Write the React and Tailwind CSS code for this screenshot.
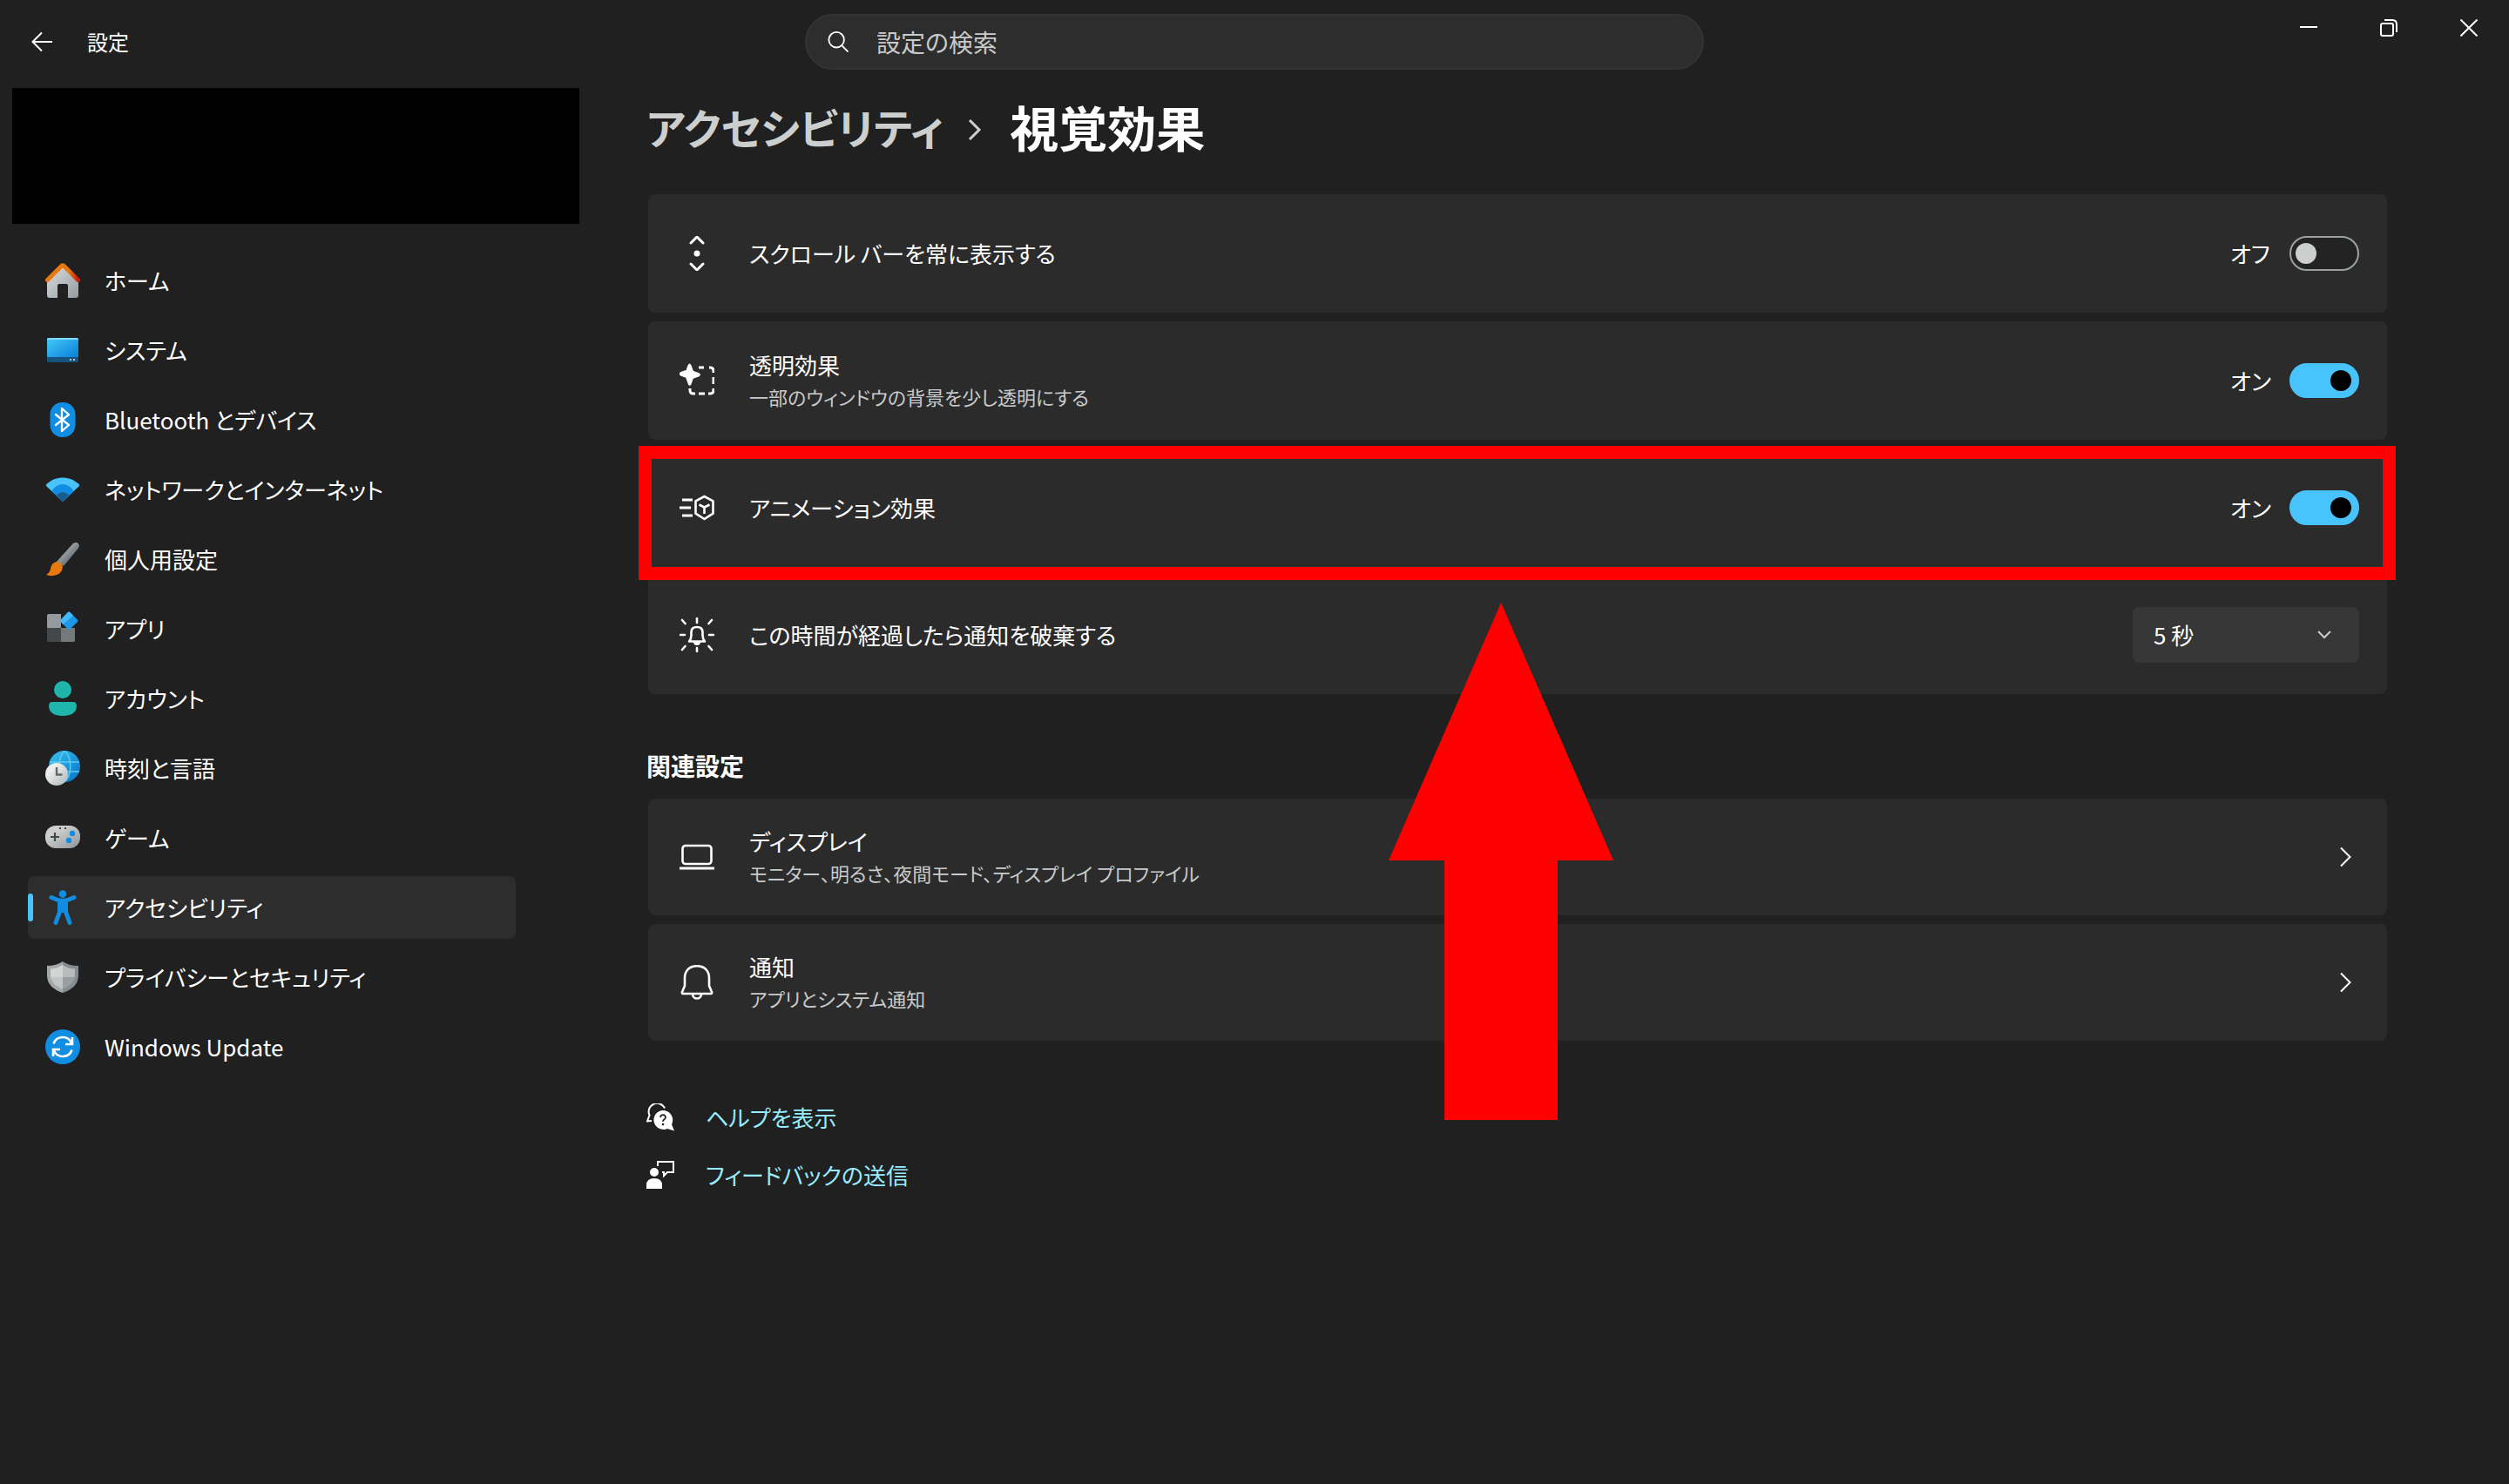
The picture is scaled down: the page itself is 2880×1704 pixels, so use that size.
import { useState } from "react";

function HomeIcon() {
  return (
    <svg viewBox="0 0 40 40" className="size-10 shrink-0" aria-hidden="true">
      <defs>
        <linearGradient id="homeWall" x1="0" y1="0" x2="1" y2="1">
          <stop offset="0" stopColor="#dcdede" />
          <stop offset="1" stopColor="#949ca0" />
        </linearGradient>
        <linearGradient id="homeRoof" x1="0" y1="0" x2="1" y2="0">
          <stop offset="0.7" stopColor="#e8790f" />
          <stop offset="1" stopColor="#cc1b10" />
        </linearGradient>
      </defs>
      <path d="M2 18 20 3l18 15v19a3 3 0 0 1-3 3h-9V26a2 2 0 0 0-2-2h-8a2 2 0 0 0-2 2v14H5a3 3 0 0 1-3-3z" fill="url(#homeWall)" />
      <path d="M2.500 19.500 18.500 3.500q1.500-1.400 3 0l16 16" fill="none" stroke="url(#homeRoof)" strokeWidth="5" strokeLinecap="round" />
    </svg>
  );
}

function SystemIcon() {
  return (
    <svg viewBox="0 0 40 40" className="size-10 shrink-0" aria-hidden="true">
      <defs>
        <linearGradient id="sysScreen" x1="0" y1="0" x2="1" y2="1">
          <stop offset="0.1" stopColor="#3fc3f5" />
          <stop offset="0.9" stopColor="#0f86dc" />
        </linearGradient>
      </defs>
      <rect x="2" y="6" width="36" height="28" rx="2" fill="#17527e" />
      <path d="M2 8a2 2 0 0 1 2-2h32a2 2 0 0 1 2 2v20H2z" fill="url(#sysScreen)" />
      <path d="M2 8a2 2 0 0 1 2-2h32a2 2 0 0 1 2 2z" fill="#7fdcfb" />
      <path d="M28 30h2v2h-2zM32 30h2v2h-2z" fill="#b8c4cc" />
    </svg>
  );
}

function BluetoothIcon() {
  return (
    <svg viewBox="0 0 40 40" className="size-10 shrink-0" aria-hidden="true">
      <rect x="5.500" width="29" height="40" rx="14" fill="#118ee2" />
      <path d="m12 14 15 12-8 7V7l8 7-15 12" fill="none" stroke="#fff" strokeWidth="2.300" strokeLinejoin="round" strokeLinecap="round" />
    </svg>
  );
}

function NetworkIcon() {
  return (
    <svg viewBox="0 0 40 40" className="size-10 shrink-0" aria-hidden="true">
      <path d="M1.500 16.500q-1.500-1.400 0-2.700C12 4 28 4 38.500 13.800q1.500 1.300 0 2.700L20 34z" fill="#48c3fb" />
      <path d="M7.500 22q5-8 12.500-8t12.500 8L21 33.500q-1 .8-2 0z" fill="#118ee2" />
      <path d="M13 26.500q7-7 14 0l-5.700 6.600q-1.300 1.300-2.600 0z" fill="#1a5c8c" />
    </svg>
  );
}

function BrushIcon() {
  return (
    <svg viewBox="0 0 40 40" className="size-10 shrink-0" aria-hidden="true">
      <defs>
        <linearGradient id="brushStem" x1="0" y1="0" x2="1" y2="1">
          <stop offset="0.3" stopColor="#a6acb0" />
          <stop offset="0.7" stopColor="#6a7073" />
        </linearGradient>
      </defs>
      <path d="M12 24 31.500 2.500q4-3.500 7 .5 1 2-1 5L21 28z" fill="url(#brushStem)" />
      <path d="M6 31q1-7 7-8 5 0 7 6-1 9-11 10-5 .5-8-1 4-2 5-7z" fill="#e8790f" />
    </svg>
  );
}

function AppsIcon() {
  return (
    <svg viewBox="0 0 40 40" className="size-10 shrink-0" aria-hidden="true">
      <path d="M2 5a2 2 0 0 1 2-2h14v16H2z" fill="#949a9e" />
      <path d="M2 19h16v16H4a2 2 0 0 1-2-2z" fill="#45484a" />
      <path d="M18 19h16v14a2 2 0 0 1-2 2H18z" fill="#74797c" />
      <path d="M17.600 11.800q-.9-1 0-2L26 1q1.200-1 2.300 0L37 9.700q1 1.100 0 2.200l-8.700 8.700q-1.100 1-2.300 0z" fill="#1c97ea" />
      <path d="M17.600 11.800q-.9-1 0-2L26 1q1.200-1 2.300 0L32 4.700 20.500 15z" fill="#45b8f7" />
    </svg>
  );
}

function AccountIcon() {
  return (
    <svg viewBox="0 0 40 40" className="size-10 shrink-0" aria-hidden="true">
      <circle cx="20" cy="10" r="10" fill="#1fb5ad" />
      <path d="M8 24h24q4 0 4 5-1 11-16 11T4 29q0-5 4-5z" fill="#1fb5ad" />
    </svg>
  );
}

function TimeIcon() {
  return (
    <svg viewBox="0 0 40 40" className="size-10 shrink-0" aria-hidden="true">
      <defs>
        <linearGradient id="globe" x1="0" y1="0" x2="1" y2="1">
          <stop offset="0.2" stopColor="#2fb4e8" />
          <stop offset="0.8" stopColor="#1180cf" />
        </linearGradient>
        <linearGradient id="clockFace" x1="0" y1="0" x2="1" y2="1">
          <stop offset="0.3" stopColor="#eceeee" />
          <stop offset="1" stopColor="#aeb3b5" />
        </linearGradient>
      </defs>
      <circle cx="22" cy="18" r="18" fill="url(#globe)" />
      <path d="M5 13h34M18 24h21M22 0C14 8 14 26 22 36M22 0c9 8 9 28 0 36" fill="none" stroke="#5ccdf5" strokeWidth="1.500" />
      <circle cx="13" cy="27" r="13" fill="url(#clockFace)" />
      <path d="M13 19v8.500h6.500" fill="none" stroke="#62686b" strokeWidth="2.400" />
    </svg>
  );
}

function GameIcon() {
  return (
    <svg viewBox="0 0 40 40" className="size-10 shrink-0" aria-hidden="true">
      <defs>
        <linearGradient id="pad" x1="0" y1="0" x2="1" y2="1">
          <stop offset="0.3" stopColor="#cdcfcf" />
          <stop offset="1" stopColor="#8b9397" />
        </linearGradient>
      </defs>
      <rect y="6" width="40" height="26" rx="12" fill="url(#pad)" />
      <path d="M6 19h10M11 14v10" stroke="#45484a" strokeWidth="2.200" />
      <path d="M16 9h2M22 9h2" stroke="#45484a" strokeWidth="2" />
      <circle cx="31" cy="15" r="3.200" fill="#118ee2" />
      <circle cx="27" cy="23" r="3.200" fill="#118ee2" />
    </svg>
  );
}

function AccessibilityIcon() {
  return (
    <svg viewBox="0 0 40 40" className="size-10 shrink-0" aria-hidden="true">
      <circle cx="20" cy="4.500" r="4.300" fill="#118ee2" />
      <path d="M7 8.500 16 12h8l9-3.500" fill="none" stroke="#118ee2" strokeWidth="5" strokeLinecap="round" strokeLinejoin="round" />
      <path d="M14 11h12v15H14z" fill="#118ee2" />
      <path d="M16.500 25 12 37.500M23.500 25l4.500 12.500" fill="none" stroke="#118ee2" strokeWidth="5" strokeLinecap="round" />
    </svg>
  );
}

function ShieldIcon() {
  return (
    <svg viewBox="0 0 40 40" className="size-10 shrink-0" aria-hidden="true">
      <path d="M20 2q7 5 18 5v11q0 14-18 20z" fill="#858b8e" />
      <path d="M20 2Q13 7 2 7v11q0 14 18 20z" fill="#a4a8aa" />
      <path d="M20 6q6 4 14 4.500V20H20z" fill="#b8bbbc" />
      <path d="M20 6q-6 4-14 4.500V20h14z" fill="#d2d4d4" />
      <path d="M6 20h14v14Q8 29 6 20z" fill="#c2c5c6" />
      <path d="M20 20h14q-2 9-14 14z" fill="#999ea0" />
    </svg>
  );
}

function UpdateIcon() {
  return (
    <svg viewBox="0 0 40 40" className="size-10 shrink-0" aria-hidden="true">
      <circle cx="20" cy="20" r="20" fill="#118ee2" />
      <path d="M9.500 16.500a11 11 0 0 1 20.500-1M31 9v8h-8M30.500 23.500a11 11 0 0 1-20.500 1M9 31v-8h8" fill="none" stroke="#fff" strokeWidth="2.600" />
    </svg>
  );
}

const iconClass = "size-10 shrink-0 fill-none stroke-white stroke-2";

function ScrollIcon() {
  return (
    <svg viewBox="0 0 40 40" className={iconClass} aria-hidden="true">
      <path d="m13 8 7-7 7 7M13 32l7 7 7-7" className="stroke-3" strokeLinecap="round" />
      <circle cx="20" cy="20" r="2.500" fill="#fff" />
    </svg>
  );
}

function TransparencyIcon() {
  return (
    <svg viewBox="0 0 40 40" className={iconClass} aria-hidden="true">
      <path d="M11.500 1q1 0 1.500 1.500l2 5.500q.4 1.300 1.700 1.700l5.500 2q1.300.5 1.300 1.600t-1.300 1.600l-5.500 2q-1.300.4-1.700 1.700l-2 5.500q-.5 1.500-1.500 1.500T10 23.100l-2-5.500q-.4-1.300-1.700-1.700l-5.300-2q-1-.5-1-1.600t1-1.600l5.300-2Q7.600 9.300 8 8l2-5.500Q10.500 1 11.500 1z" fill="#fff" stroke="#fff" strokeWidth="1" />
      <path d="M22 5h6M34 5h1q4 0 4 4v2M39 16v8M39 29v2q0 4-4 4h-2M29 35h-7M18 35h-2q-4 0-4-4v-2" className="stroke-3" />
    </svg>
  );
}

function AnimationIcon() {
  return (
    <svg viewBox="0 0 40 40" className={iconClass} aria-hidden="true">
      <path d="M3 11h12M0 20h13M3 29h12" className="stroke-3" />
      <path d="m28.500 7 10 5.300v14.400l-10 6.300-10-6.300V12.300zM22.500 16.500l6 3 6-3M28.500 19.500V27" className="stroke-[2.600]" strokeLinejoin="round" />
    </svg>
  );
}

function DismissIcon() {
  return (
    <svg viewBox="0 0 40 40" className={iconClass} aria-hidden="true">
      <path d="M20 1v5M20 35v4M1 20h5M34 20h5M3 3l3.500 4M37 3l-3.500 4M3 37l3.500-4M37 37l-3.500-4" className="stroke-[2.600]" strokeLinecap="round" />
      <path d="M11 27.500q2.500-3 2.500-7v-3.500q0-6 6.500-6t6.500 6v3.500q0 4 2.500 7z" className="stroke-[2.600]" strokeLinejoin="round" />
      <path d="M17 28a3 3 0 0 0 6 0z" fill="#fff" />
    </svg>
  );
}

function DisplayIcon() {
  return (
    <svg viewBox="0 0 40 40" className={iconClass} aria-hidden="true">
      <rect x="3.500" y="7" width="33" height="21" rx="3.500" className="stroke-[2.600]" />
      <path d="M0 33h40" className="stroke-3" />
    </svg>
  );
}

function BellIcon() {
  return (
    <svg viewBox="0 0 40 40" className={iconClass} aria-hidden="true">
      <path d="M20 1.200C11 1.200 6 7 6 15v9l-3 7q-.6 2 1 2h32q1.600 0 1-2l-3-7v-9c0-8-5-13.800-14-13.800z" className="stroke-[2.600]" strokeLinejoin="round" />
      <path d="M15 33.500a5 5 0 0 0 10 0" className="stroke-[2.600]" />
    </svg>
  );
}

function HelpIcon() {
  return (
    <svg viewBox="0 0 32 32" className="size-8 shrink-0" aria-hidden="true">
      <path d="M21 5.500A9.500 9.500 0 0 0 3.500 13.500L1 20.500l5-.5" fill="none" stroke="#fff" strokeWidth="2" />
      <path d="M19 8a11 11 0 1 0 5 21l8 2.500-3-7.500A11 11 0 0 0 19 8z" fill="#fff" />
      <path d="M16 16q.3-2.800 3-2.800t3 2.600q0 1.500-1.500 2.500-1.500.8-1.500 2.500" fill="none" stroke="#202020" strokeWidth="1.800" />
      <circle cx="19" cy="24" r="1.300" fill="#202020" />
    </svg>
  );
}

function FeedbackIcon() {
  return (
    <svg viewBox="0 0 32 32" className="size-8 shrink-0" aria-hidden="true">
      <circle cx="9" cy="13" r="5" fill="#fff" />
      <path d="M0 32v-4q0-8 9-8t9 8v4z" fill="#fff" />
      <path d="M13 6V1h18v12h-7l-4 4v-4h-2" fill="none" stroke="#fff" strokeWidth="2" />
    </svg>
  );
}

function ChevronRight() {
  return (
    <svg viewBox="0 0 24 24" className="size-6 shrink-0 fill-none stroke-white stroke-2" aria-hidden="true">
      <path d="m7 1.500 10.500 10.500L7 22.500" />
    </svg>
  );
}

const navItems = [
  { label: "ホーム", Icon: HomeIcon },
  { label: "システム", Icon: SystemIcon },
  { label: "Bluetooth とデバイス", Icon: BluetoothIcon },
  { label: "ネットワークとインターネット", Icon: NetworkIcon },
  { label: "個人用設定", Icon: BrushIcon },
  { label: "アプリ", Icon: AppsIcon },
  { label: "アカウント", Icon: AccountIcon },
  { label: "時刻と言語", Icon: TimeIcon },
  { label: "ゲーム", Icon: GameIcon },
  { label: "アクセシビリティ", Icon: AccessibilityIcon, active: true },
  { label: "プライバシーとセキュリティ", Icon: ShieldIcon },
  { label: "Windows Update", Icon: UpdateIcon },
];

const relatedItems = [
  {
    title: "ディスプレイ",
    description: "モニター、明るさ、夜間モード、ディスプレイ プロファイル",
    Icon: DisplayIcon,
  },
  { title: "通知", description: "アプリとシステム通知", Icon: BellIcon },
];

function TitleBar() {
  return (
    <header className="grid h-24 grid-cols-[1fr_minmax(0,1032px)_1fr] items-center">
      <div className="flex items-center gap-10 pl-9">
        <button type="button" aria-label="戻る">
          <svg viewBox="0 0 24 24" className="size-6 fill-none stroke-white stroke-2" aria-hidden="true">
            <path d="M24 12H1.500M12 1.500 1.500 12 12 22.500" />
          </svg>
        </button>
        <span className="text-2xl">設定</span>
      </div>

      <label className="flex h-16 items-center gap-8 rounded-full border-2 border-[#333333] bg-[#2d2d2d] pl-6">
        <svg viewBox="0 0 26 26" className="size-6 shrink-0 fill-none stroke-white stroke-2" aria-hidden="true">
          <circle cx="11" cy="10.500" r="9.500" />
          <path d="m17.500 17.500 8 8" />
        </svg>
        <input
          type="search"
          placeholder="設定の検索"
          aria-label="設定の検索"
          className="min-w-0 flex-1 bg-transparent text-[28px] leading-9 outline-none placeholder:text-[#c8cacb]"
        />
      </label>

      <div className="flex h-16 justify-end self-start">
        <button type="button" aria-label="最小化" className="flex w-[92px] items-center justify-center">
          <svg viewBox="0 0 20 20" className="size-5 stroke-white stroke-2" aria-hidden="true">
            <path d="M0 9h20" />
          </svg>
        </button>
        <button type="button" aria-label="元に戻す" className="flex w-[92px] items-center justify-center">
          <svg viewBox="0 0 20 20" className="size-5 fill-none stroke-white stroke-2" aria-hidden="true">
            <rect x="1" y="5" width="14" height="14" rx="2" />
            <path d="M5 1h9q5 0 5 5v9" />
          </svg>
        </button>
        <button type="button" aria-label="閉じる" className="flex w-[92px] items-center justify-center">
          <svg viewBox="0 0 20 20" className="size-5 stroke-white stroke-2" aria-hidden="true">
            <path d="m.5.500 19 19M19.500.500l-19 19" />
          </svg>
        </button>
      </div>
    </header>
  );
}

function Sidebar() {
  return (
    <aside className="w-[665px] shrink-0 pt-[5px] pl-[14px]">
      <div className="h-[156px] bg-black" />
      <nav className="mt-[29px] mr-[73px] ml-[18px] flex flex-col gap-2">
        {navItems.map(({ label, Icon, active }) => (
          <a
            key={label}
            href="#"
            aria-current={active ? "page" : undefined}
            className={
              active
                ? "relative flex h-[72px] items-center gap-7 rounded-lg bg-[#2d2d2d] pl-5"
                : "flex h-[72px] items-center gap-7 rounded-lg pl-5"
            }
          >
            {active && <span className="absolute left-0 h-8 w-[6px] rounded-full bg-[#48c3fb]" />}
            <Icon />
            <span className="whitespace-nowrap">{label}</span>
          </a>
        ))}
      </nav>
    </aside>
  );
}

function Toggle({ label, defaultOn }) {
  const [on, setOn] = useState(defaultOn);

  return (
    <label className="flex items-center">
      <span className="w-[68px]">{on ? "オン" : "オフ"}</span>
      <input
        type="checkbox"
        role="switch"
        aria-label={label}
        checked={on}
        onChange={(e) => setOn(e.target.checked)}
        className="h-10 w-20 appearance-none rounded-full border-2 border-[#9aa0a4] bg-[#232323] p-[5px] before:block before:size-6 before:translate-y-px before:rounded-full before:bg-[#cdcfcf] checked:border-[#48c3fb] checked:bg-[#48c3fb] checked:before:ml-10 checked:before:bg-black"
      />
    </label>
  );
}

function SettingRow({ title, description, Icon, children }) {
  return (
    <div className="flex h-[136px] items-center gap-10 rounded-lg bg-[#2b2b2b] pr-8 pl-9">
      <Icon />
      <div className="min-w-0 flex-1">
        <p>{title}</p>
        {description && <p className="text-[22px] text-[#c8cacb]">{description}</p>}
      </div>
      {children}
    </div>
  );
}

export default function App() {
  return (
    <div className="min-h-screen bg-[#202020] font-['Noto_Sans_CJK_JP',sans-serif] text-[26px] leading-9 text-white [font-feature-settings:'palt']">
      <TitleBar />

      <div className="flex">
        <Sidebar />

        <main className="min-w-0 flex-1 pr-[140px] pl-[77px]">
          <h1 className="flex h-[98px] items-center text-[56px] leading-[72px] font-bold">
            <a href="#" className="text-5xl text-[#cdcfcf]">
              アクセシビリティ
            </a>
            <svg viewBox="0 -8 16 32" className="mr-8 ml-7 h-8 w-4 fill-none stroke-[#cdcfcf] stroke-3" aria-hidden="true">
              <path d="m2 1 11 11L2 23" />
            </svg>
            視覚効果
          </h1>

          <section className="mt-[29px] ml-0.5 flex flex-col gap-[10px]">
            <SettingRow title="スクロール バーを常に表示する" Icon={ScrollIcon}>
              <Toggle label="スクロール バーを常に表示する" defaultOn={false} />
            </SettingRow>
            <SettingRow
              title="透明効果"
              description="一部のウィンドウの背景を少し透明にする"
              Icon={TransparencyIcon}
            >
              <Toggle label="透明効果" defaultOn={true} />
            </SettingRow>

            <div className="relative">
              <SettingRow title="アニメーション効果" Icon={AnimationIcon}>
                <Toggle label="アニメーション効果" defaultOn={true} />
              </SettingRow>
              {/* callout frame and arrow drawn over the page */}
              <div className="pointer-events-none absolute -top-[3px] -right-[10px] -bottom-[15px] -left-[11px] z-10 border-15 border-[#ff0000]" />
              <svg
                viewBox="0 0 258 594"
                className="pointer-events-none absolute top-[177px] left-[850px] z-10 h-[594px] w-[258px] fill-[#ff0000]"
                aria-hidden="true"
              >
                <path d="M129 0 258 296H194V594H64V296H0z" />
              </svg>
            </div>

            <SettingRow title="この時間が経過したら通知を破棄する" Icon={DismissIcon}>
              <div className="grid w-[260px] items-center">
                <select
                  aria-label="この時間が経過したら通知を破棄する"
                  className="col-start-1 row-start-1 h-16 appearance-none rounded-lg bg-[#373737] px-6"
                >
                  <option>5 秒</option>
                </select>
                <svg
                  viewBox="0 0 16 10"
                  className="pointer-events-none col-start-1 row-start-1 mr-8 h-[10px] w-4 justify-self-end fill-none stroke-[#cdcfcf] stroke-2"
                  aria-hidden="true"
                >
                  <path d="m1 1 7 7 7-7" />
                </svg>
              </div>
            </SettingRow>
          </section>

          <section>
            <h2 className="mt-16 mb-5 text-[28px] leading-9 font-bold">関連設定</h2>
            <div className="ml-0.5 flex flex-col gap-[10px]">
              {relatedItems.map(({ title, description, Icon }) => (
                <a
                  key={title}
                  href="#"
                  className="flex h-[134px] items-center gap-10 rounded-lg bg-[#2b2b2b] pr-9 pl-9"
                >
                  <Icon />
                  <span className="flex min-w-0 flex-1 flex-col">
                    <span>{title}</span>
                    <span className="text-[22px] text-[#c8cacb]">{description}</span>
                  </span>
                  <ChevronRight />
                </a>
              ))}
            </div>
          </section>

          <div className="mt-[70px] flex flex-col items-start gap-[30px] text-[#99ebff]">
            <a href="#" className="flex items-center gap-9">
              <HelpIcon />
              ヘルプを表示
            </a>
            <a href="#" className="flex items-center gap-9">
              <FeedbackIcon />
              フィードバックの送信
            </a>
          </div>
        </main>
      </div>
    </div>
  );
}
